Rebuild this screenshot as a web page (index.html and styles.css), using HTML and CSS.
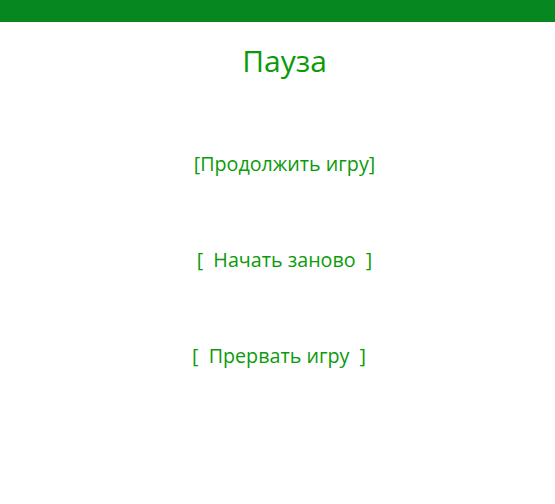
FILE: index.html
```html
<!DOCTYPE html>
<html>
<head>
<meta charset="utf-8">
<link rel="stylesheet" href="styles.css">
</head>
<body>
<div class="bar"></div>
<div class="page">
  <h1 class="title">Пауза</h1>
  <div class="menu">
    <div class="item">[Продолжить игру]</div>
    <div class="item">[&nbsp; Начать заново &nbsp;]</div>
    <div class="item shift">[&nbsp; Прервать игру &nbsp;]</div>
  </div>
</div>
</body>
</html>
```
FILE: styles.css
```css
html, body { margin: 0; padding: 0; background: #fff; }
body { font-family: "Open Sans", "Noto Sans", sans-serif; color: #0a9a0a; }
.bar { height: 22px; background: #06871f; }
.page { padding-left: 14px; }
.title { margin: 17px 0 0; font-weight: 400; font-size: 30px; line-height: 44px; text-align: center; color: #0a9a0a; }
.menu { display: flex; flex-direction: column; align-items: center; gap: 72px; margin-top: 69px; }
.item { font-size: 19.7px; line-height: 24px; }
.shift { margin-right: 11px; }
```
